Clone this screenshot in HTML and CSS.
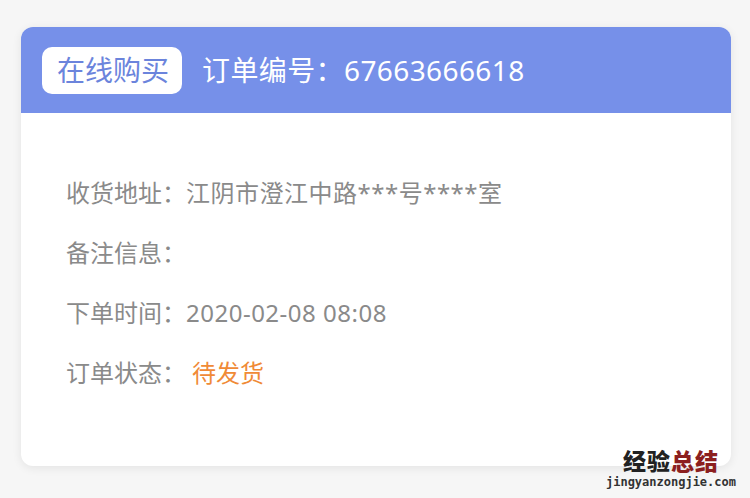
FILE: index.html
```html
<!DOCTYPE html>
<html lang="zh-CN">
<head>
  <meta charset="UTF-8">
  <title>订单详情</title>
  <link rel="stylesheet" href="styles.css">
</head>
<body>
<main class="main">
  <div class="order-card">
    <div class="order-head">
      <span class="badge">在线购买</span>
      <span class="order-no">订单编号：67663666618</span>
    </div>
    <div class="order-body">
      <p class="row"><span class="label">收货地址：</span><span class="value">江阴市澄江中路***号****室</span></p>
      <p class="row"><span class="label">备注信息：</span></p>
      <p class="row"><span class="label">下单时间：</span><span class="value">2020-02-08 08:08</span></p>
      <p class="row"><span class="label">订单状态：</span><span class="status">待发货</span></p>
    </div>
  </div>
  <div class="mark">
    <div class="mark-cn">经验<span class="mark-red">总结</span></div>
    <div class="mark-en">jingyanzongjie.com</div>
  </div>
</main>
</body>
</html>
```

FILE: styles.css
```css
* {
  margin: 0;
  padding: 0;
  box-sizing: border-box;
}

body {
  background: #f6f6f6;
  font-family: "Noto Sans", "Noto Sans CJK SC", sans-serif;
}

.main {
  position: relative;
  width: 750px;
  height: 498px;
  padding: 27px 19px 0 21px;
}

.order-card {
  width: 710px;
  height: 439px;
  background: #fff;
  border-radius: 12px;
  overflow: hidden;
  box-shadow: 0 2px 10px rgba(0, 0, 0, 0.08);
}

.order-head {
  height: 86px;
  background: #7690e9;
  display: flex;
  align-items: center;
  padding-left: 21px;
  gap: 20px;
}

.badge {
  height: 47px;
  line-height: 47px;
  padding: 0 13px 0 15px;
  background: #fff;
  color: #6b84dc;
  font-size: 28px;
  border-radius: 10px;
}

.order-no {
  color: #fff;
  font-size: 28px;
  line-height: 47px;
  letter-spacing: 0.4px;
}

.order-body {
  padding: 50px 0 0 45px;
}

.row {
  height: 60px;
  line-height: 60px;
  font-size: 24px;
  color: #8a8a8a;
}

.value {
  letter-spacing: 0.5px;
}

.status {
  margin-left: 6px;
  color: #f08a36;
}

.mark {
  position: absolute;
  right: 14px;
  bottom: 8px;
  text-align: center;
}

.mark-cn {
  font-family: "Noto Sans CJK SC", sans-serif;
  font-size: 23px;
  font-weight: 900;
  line-height: 27px;
  color: #222;
  letter-spacing: 1px;
}

.mark-red {
  color: #8c1f1f;
}

.mark-en {
  font-family: "DejaVu Sans Mono", monospace;
  font-size: 12px;
  font-weight: bold;
  line-height: 16px;
  color: #333;
}
```
